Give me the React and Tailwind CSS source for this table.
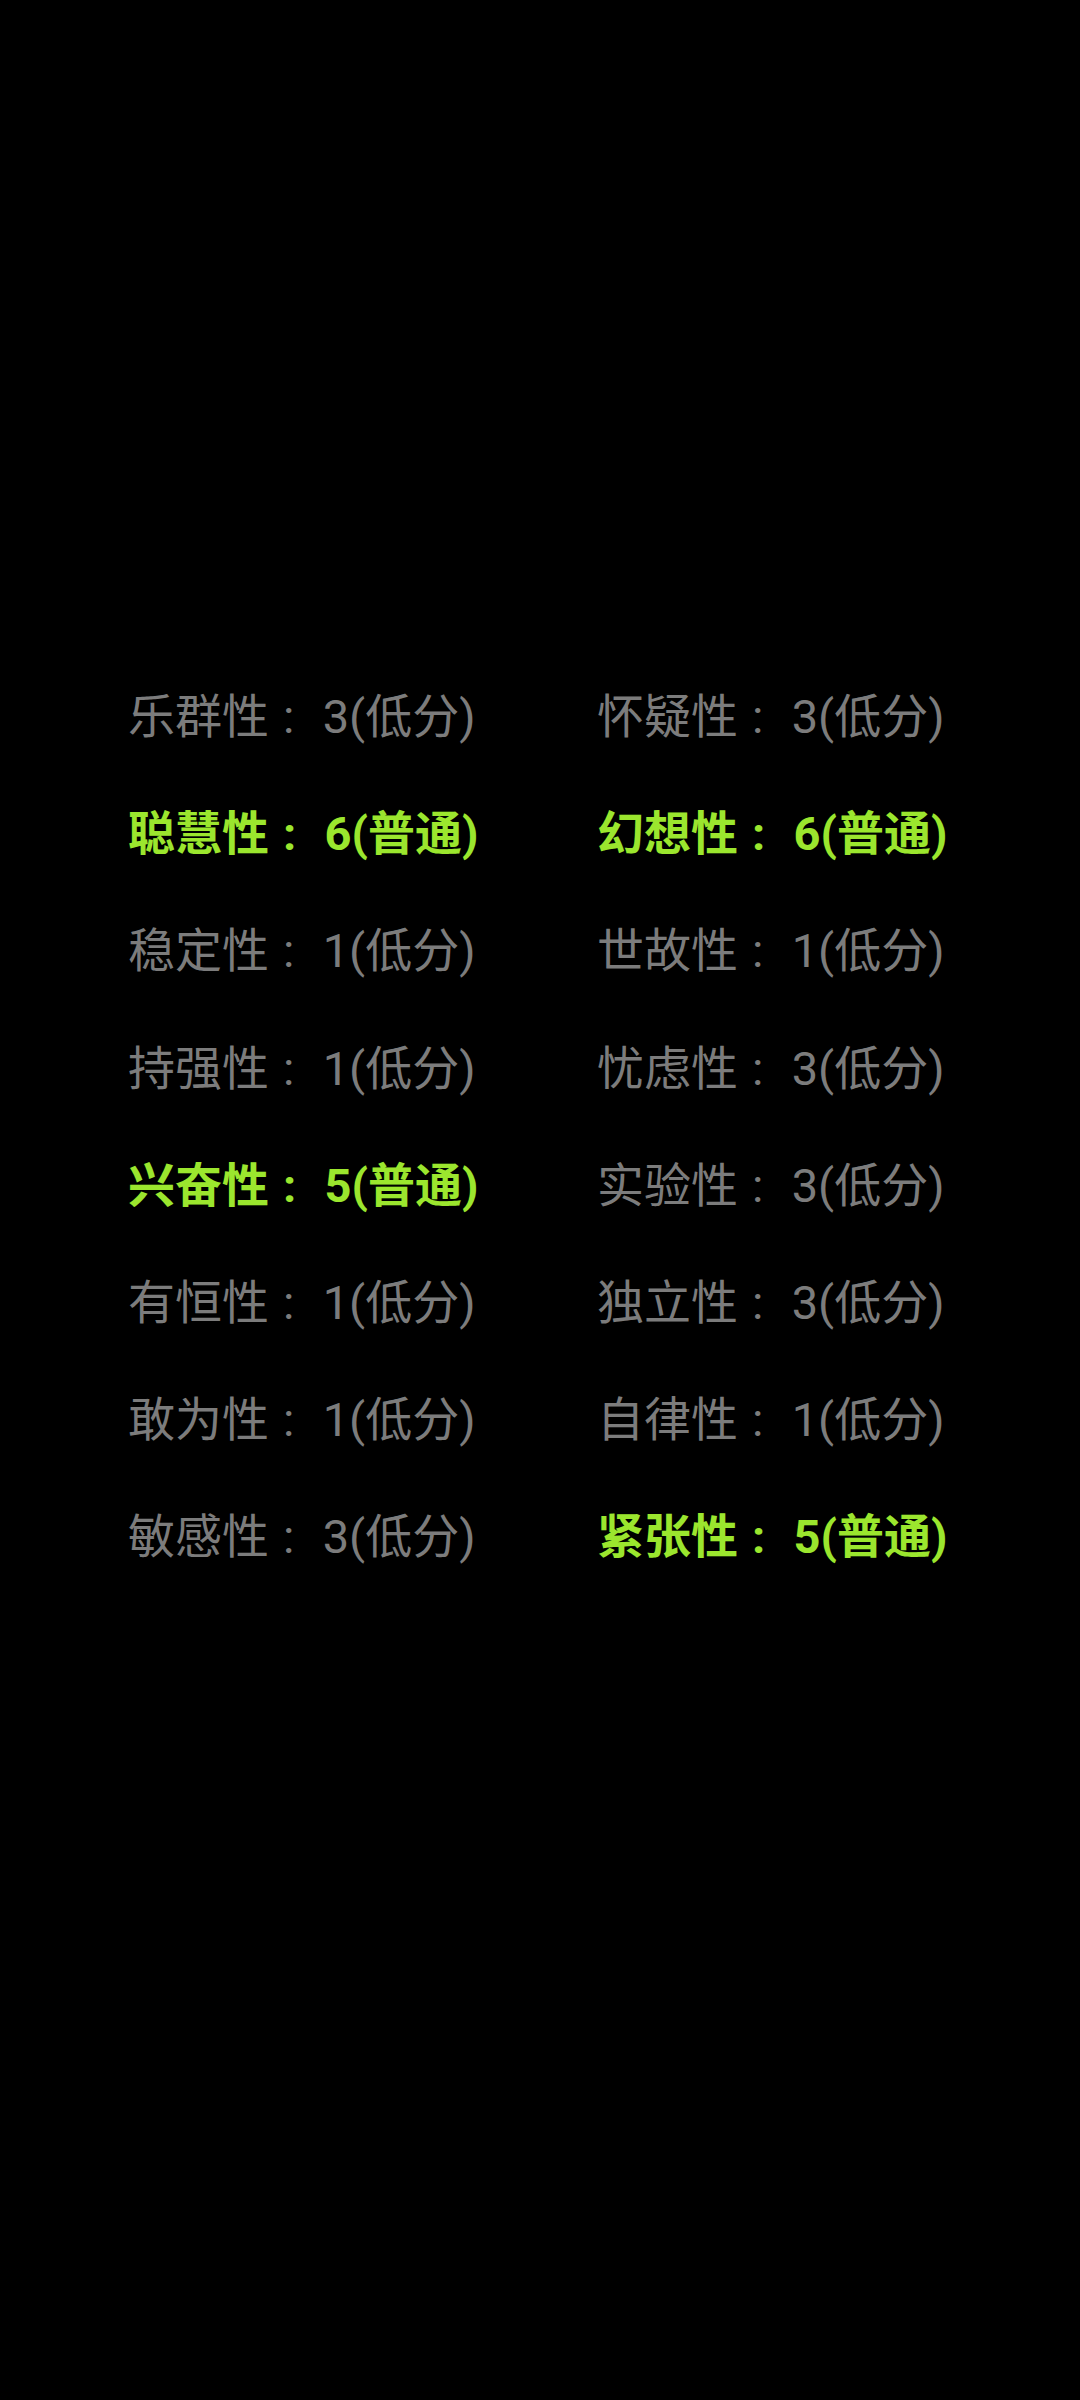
import React from 'react';

const traits = [
  ['乐群性', 3, '低分', '怀疑性', 3, '低分'],
  ['聪慧性', 6, '普通', '幻想性', 6, '普通'],
  ['稳定性', 1, '低分', '世故性', 1, '低分'],
  ['持强性', 1, '低分', '忧虑性', 3, '低分'],
  ['兴奋性', 5, '普通', '实验性', 3, '低分'],
  ['有恒性', 1, '低分', '独立性', 3, '低分'],
  ['敢为性', 1, '低分', '自律性', 1, '低分'],
  ['敏感性', 3, '低分', '紧张性', 5, '普通'],
];

const Item = ({ name, score, level }) => {
  const normal = level === '普通';
  return (
    <div
      className={
        normal
          ? 'text-[#9be62e] font-bold whitespace-nowrap'
          : 'text-[#7c7c7c] whitespace-nowrap'
      }
    >
      {name}
      <span className="ml-[0.3em] mr-[0.6em]">:</span>
      {score}({level})
    </div>
  );
};

const App = () => {
  return (
    <div
      className="w-[1080px] h-[2400px] bg-black pt-[658px] pl-[128px]"
      style={{ fontFamily: "Roboto, 'Noto Sans CJK SC', sans-serif" }}
    >
      <div className="grid grid-cols-[469px_auto] text-[47px] leading-[117.2px]">
        {traits.map((t) => (
          <React.Fragment key={t[0]}>
            <Item name={t[0]} score={t[1]} level={t[2]} />
            <Item name={t[3]} score={t[4]} level={t[5]} />
          </React.Fragment>
        ))}
      </div>
    </div>
  );
};

export default App;
